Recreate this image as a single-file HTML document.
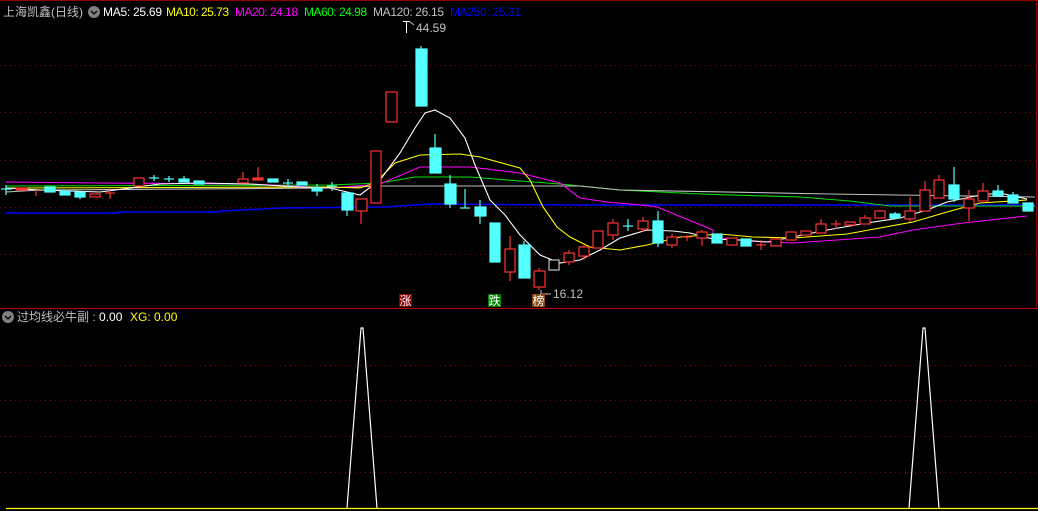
<!DOCTYPE html>
<html><head><meta charset="utf-8"><style>
html,body{margin:0;padding:0;background:#000;width:1038px;height:511px;overflow:hidden}
svg{display:block}
text{font-family:"Liberation Sans","Noto Sans CJK SC",sans-serif;font-size:12px}
</style></head><body>
<svg width="1038" height="511" viewBox="0 0 1038 511" xmlns="http://www.w3.org/2000/svg">
<rect width="1038" height="511" fill="#000"/>
<line x1="0" y1="0.5" x2="1038" y2="0.5" stroke="#8b0000"/>
<g stroke="#8b0000" stroke-dasharray="1,4">
<line x1="0" y1="65.5" x2="1036" y2="65.5"/><line x1="0" y1="112.5" x2="1036" y2="112.5"/>
<line x1="0" y1="160.5" x2="1036" y2="160.5"/><line x1="0" y1="207.5" x2="1036" y2="207.5"/>
<line x1="0" y1="254.5" x2="1036" y2="254.5"/>
<line x1="0" y1="365.5" x2="1036" y2="365.5"/><line x1="0" y1="400.5" x2="1036" y2="400.5"/>
<line x1="0" y1="436.5" x2="1036" y2="436.5"/><line x1="0" y1="472.5" x2="1036" y2="472.5"/>
</g>
<line x1="0" y1="308.5" x2="1038" y2="308.5" stroke="#c00000"/>
<line x1="1036.5" y1="0" x2="1036.5" y2="308" stroke="#8b0000"/>

<g fill="none" stroke-width="1.1">
<polyline stroke="#0000ff" stroke-width="1.4" points="6,213 118,213 118,212 220,212 220,211 280,208 385,207 430,204 580,205 1035,205"/>
<polyline stroke="#00e000" points="6,186 330,185 380,183 415,177 470,177 520,181 560,184 620,190 700,194 800,197 850,201 890,206 1035,206"/>
<polyline stroke="#c0c0c0" points="6,192 40,190 330,188 380,186 580,186 620,190 830,194 1035,197"/>
<polyline stroke="#ff00ff" points="6,182 100,183 250,184 330,188 380,184 420,167 470,167 520,173 560,183 580,198 607,202 630,204 650,206 657,207 713,230 713,237 747,241 793,243 880,237 913,230 963,223 1027,216"/>
<polyline stroke="#ffff00" points="6,188 330,187 360,188 375,183 395,163 420,155 460,154 480,157 520,168 530,180 543,207 557,227 570,237 590,247 600,248 620,250 647,245 680,237 720,234 753,237 793,238 847,234 880,228 913,222 947,212 980,203 1027,200"/>
<polyline stroke="#ffffff" points="6,188 40,190 100,192 160,184 200,183 250,184 300,187 330,188 360,195 380,180 400,153 415,128 425,113 435,110 450,118 465,138 475,165 490,200 505,215 520,235 540,255 560,263 580,260 600,250 620,238 647,230 673,231 690,233 713,239 740,240 767,242 793,237 827,230 867,223 900,218 927,210 947,202 980,195 1000,193 1027,199"/>
</g>

<g stroke-width="1.2">
<g fill="#54ffff" stroke="#54ffff">
<line x1="6" y1="185" x2="6" y2="195"/><line x1="1" y1="189" x2="12" y2="189"/>
<rect x="45" y="187" width="10" height="5"/>
<rect x="60" y="191" width="10" height="4"/>
<rect x="75" y="192" width="10" height="5"/><line x1="80" y1="197" x2="80" y2="199"/>
<line x1="154" y1="175" x2="154" y2="181"/><line x1="149" y1="178" x2="159" y2="178"/>
<line x1="169" y1="176" x2="169" y2="182"/><line x1="164" y1="179" x2="174" y2="179"/>
<rect x="179" y="179" width="10" height="3"/><line x1="184" y1="176" x2="184" y2="179"/>
<rect x="194" y="181" width="10" height="3"/>
<rect x="268" y="179" width="10" height="3"/>
<line x1="288" y1="179" x2="288" y2="187"/><line x1="283" y1="183" x2="293" y2="183"/>
<rect x="297" y="182" width="10" height="3"/>
<rect x="312" y="188" width="10" height="3"/><line x1="317" y1="184" x2="317" y2="196"/>
<line x1="332" y1="182" x2="332" y2="191"/><line x1="327" y1="186" x2="337" y2="186"/>
<rect x="342" y="193" width="11" height="17"/><line x1="347" y1="210" x2="347" y2="216"/>
<rect x="416" y="49" width="11" height="57"/><line x1="421" y1="46" x2="421" y2="49"/>
<rect x="430" y="148" width="11" height="25"/><line x1="435" y1="134" x2="435" y2="148"/>
<rect x="445" y="184" width="11" height="20"/><line x1="450" y1="175" x2="450" y2="208"/>
<line x1="465" y1="189" x2="465" y2="208"/><line x1="460" y1="208" x2="470" y2="208"/>
<rect x="475" y="207" width="11" height="9"/><line x1="480" y1="200" x2="480" y2="224"/>
<rect x="490" y="223" width="10" height="39"/>
<rect x="519" y="245" width="11" height="33"/><line x1="524" y1="241" x2="524" y2="245"/>
<line x1="628" y1="219" x2="628" y2="231"/><line x1="623" y1="226" x2="633" y2="226"/>
<rect x="653" y="221" width="10" height="22"/><line x1="658" y1="211" x2="658" y2="247"/>
<rect x="712" y="234" width="10" height="9"/>
<rect x="741" y="239" width="10" height="7"/>
<rect x="890" y="214" width="10" height="4"/><line x1="895" y1="212" x2="895" y2="214"/>
<rect x="949" y="185" width="10" height="14"/><line x1="954" y1="167" x2="954" y2="202"/>
<rect x="993" y="191" width="10" height="5"/><line x1="998" y1="185" x2="998" y2="191"/>
<rect x="1008" y="195" width="10" height="8"/><line x1="1013" y1="192" x2="1013" y2="195"/>
<rect x="1023" y="203" width="10" height="8"/>
</g>
<g fill="#000" stroke="#ff3232">
<rect x="16" y="188" width="11" height="2" fill="#ff3232"/>
<line x1="36" y1="190" x2="36" y2="196"/>
<rect x="90" y="194" width="10" height="3"/>
<line x1="110" y1="190" x2="110" y2="199"/><line x1="105" y1="193" x2="115" y2="193"/>
<rect x="134" y="178" width="10" height="8"/>
<line x1="243" y1="172" x2="243" y2="179"/><rect x="238" y="179" width="10" height="4"/>
<line x1="258" y1="167" x2="258" y2="178"/><rect x="253" y="178" width="10" height="2" fill="#ff3232"/>
<line x1="361" y1="211" x2="361" y2="224"/><rect x="356" y="199" width="11" height="12"/>
<rect x="371" y="151" width="10" height="52"/>
<rect x="386" y="92" width="11" height="30"/>
<line x1="510" y1="236" x2="510" y2="281"/><rect x="505" y="249" width="10" height="23"/>
<line x1="539" y1="268" x2="539" y2="290"/><rect x="534" y="271" width="11" height="16"/>
<rect x="549" y="260" width="10" height="10" stroke="#c0c0c0"/>
<line x1="569" y1="250" x2="569" y2="265"/><rect x="564" y="253" width="10" height="9"/>
<line x1="584" y1="245" x2="584" y2="260"/><rect x="579" y="247" width="10" height="9"/>
<rect x="593" y="231" width="10" height="17"/>
<line x1="613" y1="219" x2="613" y2="240"/><rect x="608" y="223" width="10" height="12"/>
<line x1="643" y1="217" x2="643" y2="232"/><rect x="638" y="221" width="10" height="8"/>
<line x1="672" y1="234" x2="672" y2="248"/><rect x="667" y="237" width="10" height="8"/>
<line x1="687" y1="235" x2="687" y2="241"/><line x1="682" y1="237" x2="692" y2="237"/>
<line x1="702" y1="230" x2="702" y2="246"/><rect x="697" y="232" width="10" height="6"/>
<rect x="727" y="238" width="10" height="7"/>
<line x1="761" y1="240" x2="761" y2="250"/><line x1="756" y1="245" x2="766" y2="245"/>
<rect x="771" y="239" width="10" height="7"/>
<rect x="786" y="232" width="10" height="8"/>
<rect x="801" y="231" width="10" height="4"/>
<line x1="821" y1="219" x2="821" y2="224"/><rect x="816" y="224" width="10" height="9"/>
<line x1="836" y1="220" x2="836" y2="229"/><line x1="831" y1="224" x2="841" y2="224"/>
<rect x="845" y="222" width="10" height="3"/>
<line x1="865" y1="215" x2="865" y2="218"/><rect x="860" y="218" width="10" height="6"/>
<rect x="875" y="211" width="10" height="7"/>
<line x1="910" y1="197" x2="910" y2="222"/><rect x="905" y="211" width="10" height="8"/>
<line x1="925" y1="181" x2="925" y2="190"/><rect x="920" y="190" width="10" height="21"/>
<line x1="939" y1="175" x2="939" y2="180"/><rect x="934" y="180" width="10" height="18"/>
<line x1="969" y1="190" x2="969" y2="221"/><rect x="964" y="199" width="10" height="9"/>
<line x1="983" y1="183" x2="983" y2="191"/><rect x="978" y="191" width="10" height="10"/>
</g>
</g>

<g stroke="#fff">
<line x1="403" y1="21.5" x2="410" y2="21.5"/><line x1="406.5" y1="21" x2="406.5" y2="33"/>
<line x1="410" y1="22" x2="414" y2="25" stroke="#c0c0c0"/>
<line x1="541" y1="294" x2="551" y2="294" stroke="#c0c0c0"/><line x1="541" y1="290" x2="541" y2="298" stroke="#c0c0c0"/>
</g>
<text x="416" y="32" fill="#c0c0c0">44.59</text>
<text x="553" y="298" fill="#c0c0c0">16.12</text>
<rect x="399" y="294" width="13" height="13" fill="#8b0000"/><text x="399.5" y="305" fill="#fff">涨</text>
<rect x="488" y="294" width="13" height="13" fill="#008000"/><text x="488.5" y="305" fill="#fff">跌</text>
<rect x="532" y="294" width="13" height="13" fill="#8b4513"/><text x="532.5" y="305" fill="#fff">榜</text>

<text x="3" y="16" fill="#c0c0c0">上海凯鑫(日线)</text>
<circle cx="94" cy="12" r="6" fill="#808080"/><polyline points="91,11 94,14 97,11" fill="none" stroke="#000" stroke-width="1.3"/>
<text x="103" y="16" fill="#fff" textLength="59">MA5: 25.69</text>
<text x="166" y="16" fill="#ffff00" textLength="63">MA10: 25.73</text>
<text x="235" y="16" fill="#ff00ff" textLength="63">MA20: 24.18</text>
<text x="304" y="16" fill="#00ff00" textLength="63">MA60: 24.98</text>
<text x="373" y="16" fill="#c0c0c0" textLength="71">MA120: 26.15</text>
<text x="450" y="16" fill="#0000ff" textLength="71">MA250: 25.31</text>

<circle cx="8" cy="317" r="6" fill="#808080"/><polyline points="5,316 8,319 11,316" fill="none" stroke="#000" stroke-width="1.3"/>
<text x="17" y="321" fill="#c0c0c0">过均线必牛副 : <tspan fill="#fff">0.00</tspan></text>
<text x="130" y="321" fill="#ffff00">XG: 0.00</text>
<g fill="none" stroke="#fff" stroke-width="1.2">
<polyline points="347,508 361,328 363,328 377,508"/>
<polyline points="909,508 923,328 925,328 939,508"/>
</g>
<line x1="6" y1="508.5" x2="1038" y2="508.5" stroke="#ffff00" stroke-width="1.2"/>
</svg>
</body></html>
